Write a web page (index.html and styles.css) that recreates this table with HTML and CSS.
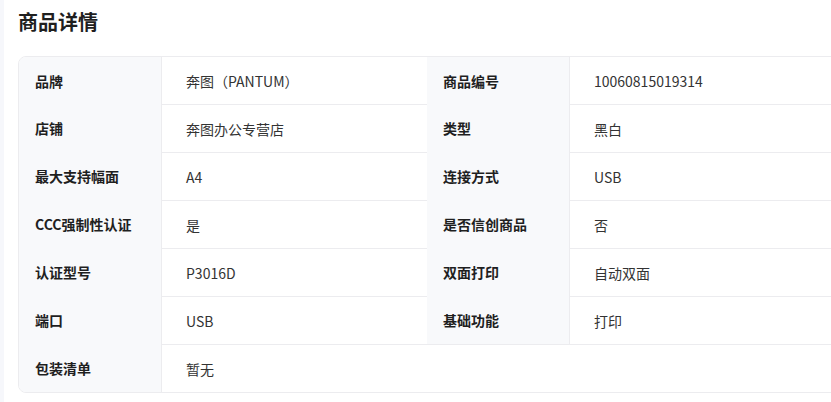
FILE: index.html
```html
<!DOCTYPE html>
<html lang="zh-CN">
<head>
<meta charset="utf-8">
<title>商品详情</title>
<link rel="stylesheet" href="styles.css">
</head>
<body class="page">
  <div class="content">
    <h2 class="title">商品详情</h2>
    <div class="card">
      <div class="label">品牌</div>
      <div class="value first">奔图（PANTUM）</div>
      <div class="label">商品编号</div>
      <div class="value first">10060815019314</div>

      <div class="label">店铺</div>
      <div class="value">奔图办公专营店</div>
      <div class="label">类型</div>
      <div class="value">黑白</div>

      <div class="label">最大支持幅面</div>
      <div class="value">A4</div>
      <div class="label">连接方式</div>
      <div class="value">USB</div>

      <div class="label">CCC强制性认证</div>
      <div class="value">是</div>
      <div class="label">是否信创商品</div>
      <div class="value">否</div>

      <div class="label">认证型号</div>
      <div class="value">P3016D</div>
      <div class="label">双面打印</div>
      <div class="value">自动双面</div>

      <div class="label">端口</div>
      <div class="value">USB</div>
      <div class="label">基础功能</div>
      <div class="value">打印</div>

      <div class="label">包装清单</div>
      <div class="value wide">暂无</div>
    </div>
  </div>
</body>
</html>
```
FILE: styles.css
```css
html, body {
  margin: 0;
  padding: 0;
}
.page {
  width: 831px;
  height: 402px;
  overflow: hidden;
  background: #ffffff;
  border-left: 4px solid #f6f7fb;
  box-sizing: border-box;
  font-family: "Noto Sans CJK SC", "Noto Sans", sans-serif;
}
.content {
  padding: 8px 0 0 14px;
}
.title {
  margin: 0 0 20px 0;
  font-size: 20px;
  line-height: 28px;
  font-weight: 700;
  color: #1f1f1f;
}
.card {
  width: 830px;
  border: 1px solid #ececef;
  border-radius: 8px;
  overflow: hidden;
  display: grid;
  grid-template-columns: 142px 266px 142px 1fr;
  grid-auto-rows: 48px;
  grid-template-rows: 47px;
  font-size: 14px;
}
.label {
  background: #f8f9fb;
  padding-left: 16px;
  display: flex;
  align-items: center;
  font-weight: 600;
  color: #1f1f1f;
}
.value {
  display: flex;
  align-items: center;
  padding-left: 24px;
  color: #333333;
  border-top: 1px solid #ececef;
}
.label + .value {
  border-left: 1px solid #ececef;
}
.value.first {
  border-top: none;
}
.value.wide {
  grid-column: span 3;
}
```
